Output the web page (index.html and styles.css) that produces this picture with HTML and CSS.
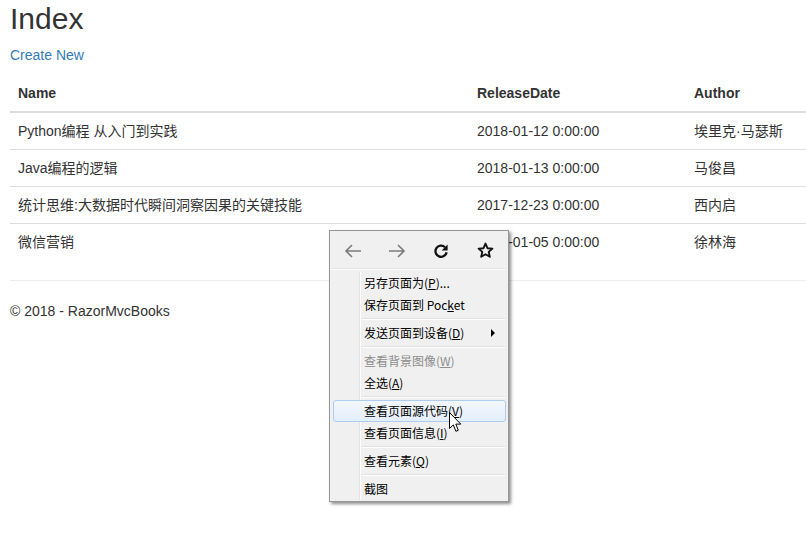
FILE: index.html
```html
<!DOCTYPE html>
<html>
<head>
<meta charset="utf-8">
<title>Index</title>
<link rel="stylesheet" href="styles.css">
</head>
<body>
<div class="page">
  <h2 class="title">Index</h2>
  <p class="create"><a href="#">Create New</a></p>
  <table class="books">
    <colgroup><col class="c1"><col class="c2"><col></colgroup>
    <thead>
      <tr><th>Name</th><th>ReleaseDate</th><th>Author</th></tr>
    </thead>
    <tbody>
      <tr><td>Python编程 从入门到实践</td><td>2018-01-12 0:00:00</td><td>埃里克·马瑟斯</td></tr>
      <tr><td>Java编程的逻辑</td><td>2018-01-13 0:00:00</td><td>马俊昌</td></tr>
      <tr><td>统计思维:大数据时代瞬间洞察因果的关键技能</td><td>2017-12-23 0:00:00</td><td>西内启</td></tr>
      <tr><td>微信营销</td><td>2018-01-05 0:00:00</td><td>徐林海</td></tr>
    </tbody>
  </table>
  <hr class="rule">
  <footer class="footer"><p>© 2018 - RazorMvcBooks</p></footer>
</div>

<div class="menu">
  <div class="nav">
    <span class="btn">
      <svg width="18" height="16" viewBox="0 0 18 16"><path d="M17 8H2M8 2L2 8L8 14" fill="none" stroke="#7b7b7b" stroke-width="1.6"/></svg>
    </span>
    <span class="btn">
      <svg width="18" height="16" viewBox="0 0 18 16"><path d="M1 8H16M10 2L16 8L10 14" fill="none" stroke="#7b7b7b" stroke-width="1.6"/></svg>
    </span>
    <span class="btn">
      <svg width="16" height="16" viewBox="0 0 16 16"><path d="M12 4.2A5.6 5.6 0 1 0 13.6 9.2" fill="none" stroke="#111" stroke-width="2.3"/><path d="M14.6 1.6V7.6H8.6Z" fill="#111"/></svg>
    </span>
    <span class="btn">
      <svg width="17" height="17" viewBox="0 0 17 17"><path d="M8.5 1.6L10.5 6.2L15.4 6.6L11.7 9.9L12.8 14.8L8.5 12.2L4.2 14.8L5.3 9.9L1.6 6.6L6.5 6.2Z" fill="none" stroke="#111" stroke-width="1.9" stroke-linejoin="round"/></svg>
    </span>
  </div>
  <div class="sep top"></div>
  <div class="items">
    <div class="item">另存页面为(<u>P</u>)...</div>
    <div class="item">保存页面到 Poc<u>k</u>et</div>
    <div class="sep"></div>
    <div class="item sub">发送页面到设备(<u>D</u>)</div>
    <div class="sep"></div>
    <div class="item disabled">查看背景图像(<u>W</u>)</div>
    <div class="item">全选(<u>A</u>)</div>
    <div class="sep"></div>
    <div class="item active">查看页面源代码(<u>V</u>)</div>
    <div class="item">查看页面信息(<u>I</u>)</div>
    <div class="sep"></div>
    <div class="item">查看元素(<u>Q</u>)</div>
    <div class="sep"></div>
    <div class="item">截图</div>
  </div>
</div>

<svg class="cursor" width="13" height="21" viewBox="0 0 13 21"><path d="M0.5 0.5V16.5L4.3 12.9L6.9 19.3L9.3 18.3L6.8 12.1H11.8Z" fill="#fff" stroke="#000" stroke-width="1" stroke-linejoin="round"/></svg>
</body>
</html>
```

FILE: styles.css
```css
html, body {
  margin: 0;
  padding: 0;
  background: #fff;
}
body {
  font-family: "Liberation Sans", "Noto Sans CJK SC", sans-serif;
  font-size: 14px;
  line-height: 20px;
  color: #333;
  overflow: hidden;
}
.page {
  padding: 2px 0 0 10px;
}
.title {
  margin: 0 0 10px;
  font-size: 30px;
  line-height: 33px;
  font-weight: 500;
  color: #333;
}
.create {
  margin: 0 0 10px;
}
.create a {
  color: #337ab7;
  text-decoration: none;
}
.books {
  width: 100%;
  border-collapse: collapse;
  border-spacing: 0;
  table-layout: fixed;
  margin-bottom: 20px;
}
.books .c1 { width: 459px; }
.books .c2 { width: 217px; }
.books th, .books td {
  padding: 8px;
  text-align: left;
  vertical-align: top;
  line-height: 20px;
  white-space: nowrap;
}
.books th {
  font-weight: bold;
  border-bottom: 2px solid #ddd;
}
.books td {
  border-top: 1px solid #ddd;
}
.rule {
  margin: 20px 0;
  border: 0;
  border-top: 1px solid #eee;
  height: 0;
}
.footer p {
  margin: 0 0 10px;
}

.menu {
  position: absolute;
  left: 329px;
  top: 230px;
  width: 180px;
  box-sizing: border-box;
  background: #f0f0f0;
  border: 1px solid #979797;
  box-shadow: 2px 2px 3px rgba(0, 0, 0, 0.45);
  padding: 2px 0 1px;
  font-family: "Noto Sans CJK SC", sans-serif;
  font-size: 12px;
  color: #000;
}
.nav {
  display: flex;
  height: 35px;
  padding-left: 1px;
}
.btn {
  width: 44px;
  display: flex;
  align-items: center;
  justify-content: center;
}
.sep {
  height: 6px;
  margin: 0 3px 0 32px;
  background: linear-gradient(#f0f0f0 2px, #e0e0e0 2px, #e0e0e0 3px, #fff 3px, #fff 4px, #f0f0f0 4px);
}
.sep.top {
  height: 4px;
  margin: 0 3px;
  background: linear-gradient(#e0e0e0 1px, #fff 1px, #fff 2px, #f0f0f0 2px);
}
.items {
  background: linear-gradient(to right, transparent 29px, #e2e3e3 29px, #e2e3e3 30px, #fff 30px, #fff 31px, transparent 31px);
}
.item {
  position: relative;
  height: 22px;
  line-height: 20px;
  margin: 0 2px 0 3px;
  padding-left: 30px;
  border: 1px solid transparent;
  border-radius: 3px;
  box-sizing: border-box;
  white-space: nowrap;
}
.item u {
  text-underline-offset: 1px;
}
.item.disabled {
  color: #8d8d8d;
}
.item.active {
  border-color: #aeccf0;
  background: linear-gradient(#f2f7fd, #e4eefb);
}
.item.sub::after {
  content: "";
  position: absolute;
  right: 10px;
  top: 6px;
  border-left: 4px solid #000;
  border-top: 4px solid transparent;
  border-bottom: 4px solid transparent;
}
.cursor {
  position: absolute;
  left: 449px;
  top: 412px;
}
```
